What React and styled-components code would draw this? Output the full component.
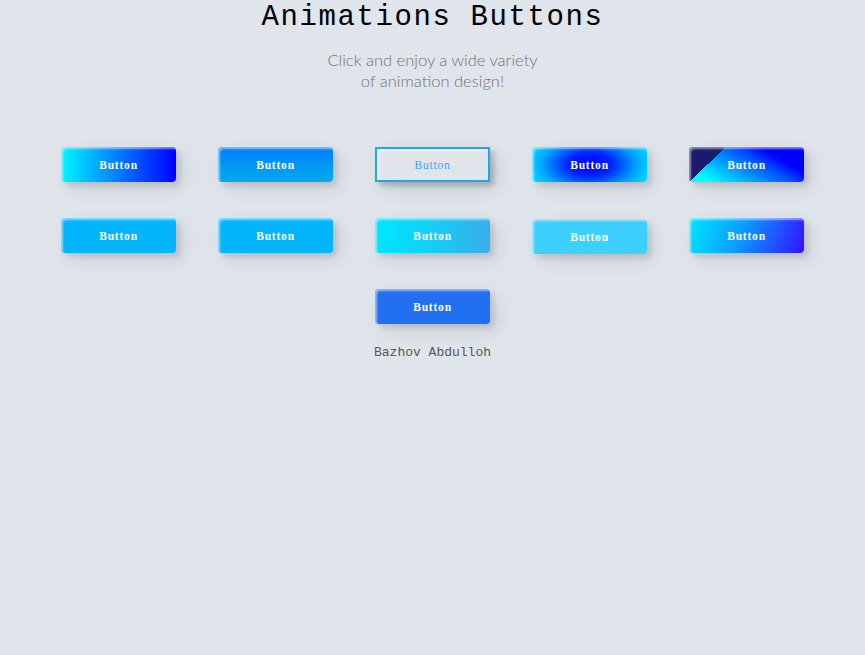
import React from "react";
import styled, { createGlobalStyle, css } from "styled-components";

const Global = createGlobalStyle`
  html, body { margin: 0; padding: 0; background: #e0e5ec; }
  body { min-height: 655px; }
`;

const Page = styled.div`
  display: flex;
  flex-direction: column;
  align-items: center;
`;

const Title = styled.h1`
  margin: 0;
  margin-top: 1px;
  font-family: "Liberation Mono", "DejaVu Sans Mono", monospace;
  font-weight: 400;
  font-size: 29px;
  line-height: 34px;
  letter-spacing: 1.6px;
  color: #000;
`;

const Subtitle = styled.p`
  margin: 15px 0 0;
  font-family: Lato, "Open Sans", sans-serif;
  font-weight: 300;
  font-size: 16.5px;
  line-height: 21px;
  color: #727272;
  text-align: center;
`;

const Grid = styled.div`
  margin-top: 55px;
  display: grid;
  grid-template-columns: repeat(5, 157px);
  row-gap: 36px;
  justify-items: center;
`;

const variants = {
  1: css`background: linear-gradient(90deg, #00f7ff 0%, #0088ff 45%, #0000ff 100%);`,
  2: css`background: linear-gradient(0deg, #00acee 0%, #027efb 100%);`,
  3: css`
    background: transparent;
    border: 2px solid #1aa9ef;
    border-radius: 0;
    color: #3fa5f5;
    font-weight: 400;
    box-shadow: inset 2px 2px 2px 0px rgba(255, 255, 255, 0.6),
      7px 7px 20px 0px rgba(0, 0, 0, 0.12), 4px 4px 5px 0px rgba(0, 0, 0, 0.18);
  `,
  4: css`background: radial-gradient(ellipse 62% 110% at 50% 50%, #0000ff 0%, #0022ff 30%, #00a0ff 65%, #00f6ff 100%);`,
  5: css`
    background:
      linear-gradient(to bottom right, #1b1b6e 50%, transparent 50%) top left / 37px 35px no-repeat,
      linear-gradient(30deg, #00ffff 12%, #0055ff 58%, #0000ff 75%);
  `,
  6: css`background: #04b5fc;`,
  7: css`background: #04b5fc;`,
  8: css`background: linear-gradient(90deg, #00e6ff 0%, #12d0f8 45%, #3aaee8 100%);`,
  9: css`background: #3dcffe; transform: translateY(1px);`,
  10: css`background: linear-gradient(110deg, #00e8ff 0%, #0a9cff 45%, #3311ff 100%);`,
  11: css`background: #2070f0;`,
};

const Btn = styled.button`
  width: 115px;
  height: 35px;
  padding: 0;
  border: none;
  border-radius: 4px;
  color: #fff;
  font-family: "Liberation Serif", "DejaVu Serif", serif;
  font-weight: 700;
  font-size: 11.5px;
  letter-spacing: 0.8px;
  cursor: pointer;
  outline: none;
  box-sizing: border-box;
  box-shadow: inset 2px 2px 2px 0px rgba(255, 255, 255, 0.5),
    7px 7px 20px 0px rgba(0, 0, 0, 0.1), 4px 4px 5px 0px rgba(0, 0, 0, 0.1);
  ${(p) => variants[p.$v]}
`;

const Cell = styled.div`
  grid-column: ${(p) => p.$col || "auto"};
`;

const Author = styled.div`
  margin-top: 20px;
  font-family: "Liberation Mono", "DejaVu Sans Mono", monospace;
  font-size: 13px;
  line-height: 18px;
  color: #555;
`;

export default function App() {
  const list = [1, 2, 3, 4, 5, 6, 7, 8, 9, 10];
  return (
    <Page>
      <Global />
      <Title>Animations Buttons</Title>
      <Subtitle>
        Click and enjoy a wide variety
        <br />
        of animation design!
      </Subtitle>
      <Grid>
        {list.map((v) => (
          <Cell key={v}>
            <Btn $v={v}>Button</Btn>
          </Cell>
        ))}
        <Cell $col="3">
          <Btn $v={11}>Button</Btn>
        </Cell>
      </Grid>
      <Author>Bazhov Abdulloh</Author>
    </Page>
  );
}
